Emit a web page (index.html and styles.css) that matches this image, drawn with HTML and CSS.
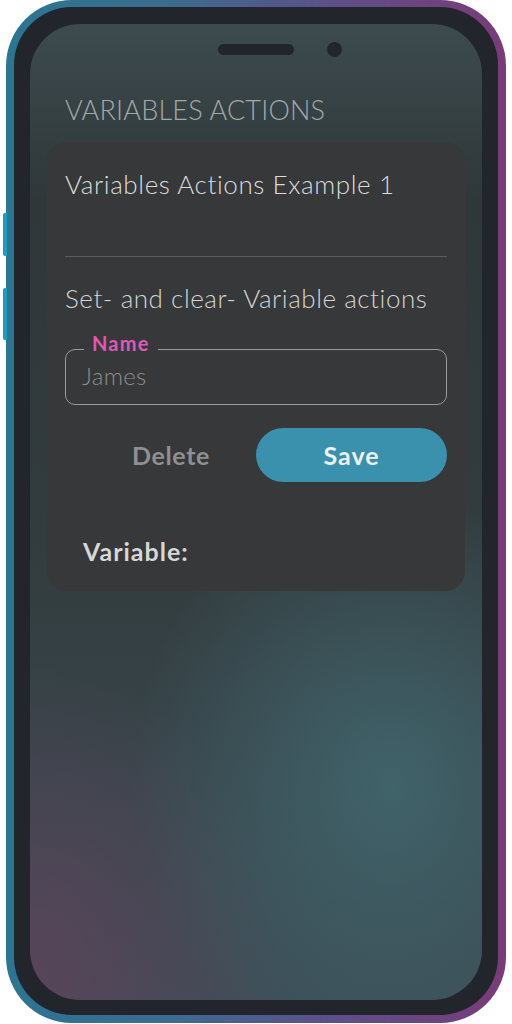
FILE: index.html
```html
<!DOCTYPE html>
<html lang="en">
<head>
    <meta charset="UTF-8">
    <meta name="viewport" content="width=device-width, initial-scale=1.0">
    <title>Variables Actions</title>
    <link rel="stylesheet" href="styles.css">
</head>
<body>
    <div class="phone">
        <span class="side-btn up"></span>
        <span class="side-btn down"></span>
        <div class="bezel">
            <div class="screen">
                <div class="notch">
                    <span class="speaker"></span>
                    <span class="camera"></span>
                </div>
                <h1 class="page-title">VARIABLES ACTIONS</h1>
                <div class="card">
                    <h2 class="card-title">Variables Actions Example 1</h2>
                    <hr class="divider">
                    <p class="card-sub">Set- and clear- Variable actions</p>
                    <fieldset class="field">
                        <legend>Name</legend>
                        <input type="text" value="James">
                    </fieldset>
                    <div class="actions">
                        <button class="btn-delete">Delete</button>
                        <button class="btn-save">Save</button>
                    </div>
                    <div class="var-label">Variable:</div>
                </div>
            </div>
        </div>
    </div>
</body>
</html>
```

FILE: styles.css
```css
body{
    margin: 0;
    background-color: white;
    font-family: Lato, "Noto Sans", sans-serif;
}

.phone{
    position: relative;
    margin-left: 6px;
    width: 500px;
    height: 1023px;
    padding: 7px 8px 8px 8px;
    box-sizing: border-box;
    border-radius: 66px;
    background: linear-gradient(90deg, #2a7690 0%, #3e6a8e 35%, #5d4f88 65%, #7a3b78 100%);
}

.side-btn{
    position: absolute;
    left: -3px;
    width: 4px;
    background-color: #1a9cc4;
    border-radius: 2px 0 0 2px;
}
.side-btn.up{ top: 213px; height: 43px; }
.side-btn.down{ top: 288px; height: 52px; }

.bezel{
    height: 100%;
    padding: 17px 16px 15px 16px;
    box-sizing: border-box;
    border-radius: 58px;
    background-color: #22252c;
}

.screen{
    position: relative;
    height: 100%;
    border-radius: 50px;
    overflow: hidden;
    background:
        radial-gradient(ellipse 260px 300px at 360px 760px, rgba(66, 104, 112, 0.85), rgba(66, 104, 112, 0) 100%),
        radial-gradient(ellipse 260px 320px at 0px 960px, rgba(90, 68, 90, 0.95), rgba(90, 68, 90, 0) 100%),
        linear-gradient(180deg, #3d4b4e 0%, #2f3739 18%, #323b3d 50%, #3d4d55 100%);
    padding: 70px 17px 0 17px;
    box-sizing: border-box;
}

.notch{
    position: absolute;
    top: 18px;
    left: 188px;
    display: flex;
    align-items: center;
    gap: 33px;
}
.speaker{
    width: 76px;
    height: 11px;
    border-radius: 6px;
    background-color: #22252c;
}
.camera{
    width: 15px;
    height: 15px;
    border-radius: 50%;
    background-color: #22252c;
}

.page-title{
    margin: 0 0 16px 18px;
    font-size: 27px;
    line-height: 32px;
    font-weight: 300;
    letter-spacing: 0.2px;
    color: #a3a8a9;
}

.card{
    background-color: #363839;
    border-radius: 20px;
    padding: 27px 18px 0 18px;
    height: 449px;
    box-sizing: border-box;
}

.card-title{
    margin: 0;
    font-size: 26px;
    line-height: 30px;
    font-weight: 300;
    letter-spacing: 0.6px;
    color: #dcdcdc;
}

.divider{
    margin: 57px 0 0 0;
    border: none;
    height: 1px;
    background-color: #595c5d;
}

.card-sub{
    margin: 26px 0 0 0;
    font-size: 26px;
    line-height: 30px;
    font-weight: 300;
    letter-spacing: 0.55px;
    color: #d4d4d4;
}

.field{
    margin: 21px 0 0 0;
    padding: 0 16px;
    height: 71px;
    box-sizing: border-box;
    border: 1px solid #9b9b9b;
    border-radius: 10px;
}
.field legend{
    margin-left: 2px;
    padding: 0 8px 13px 8px;
    font-size: 20px;
    line-height: 18px;
    font-weight: 700;
    letter-spacing: 1.2px;
    color: #e257b6;
}
.field input{
    width: 100%;
    margin-top: -4px;
    padding: 0;
    border: none;
    outline: none;
    background: none;
    font-family: Lato, "Noto Sans", sans-serif;
    font-size: 24px;
    font-weight: 300;
    letter-spacing: 0.3px;
    color: #8d8e8e;
}

.actions{
    margin-top: 23px;
    display: flex;
    justify-content: flex-end;
}
.actions button{
    height: 54px;
    border: none;
    font-family: Lato, "Noto Sans", sans-serif;
    font-size: 25px;
    font-weight: 700;
}
.btn-delete{
    width: 170px;
    background: none;
    letter-spacing: 0.6px;
    color: #8f9091;
}
.btn-save{
    width: 191px;
    border-radius: 27px;
    background-color: #3a91ae;
    letter-spacing: 1px;
    color: #eef2f4;
}

.var-label{
    margin: 54px 0 0 18px;
    font-size: 25px;
    font-weight: 700;
    letter-spacing: 1px;
    color: #d6d7d7;
}
```
